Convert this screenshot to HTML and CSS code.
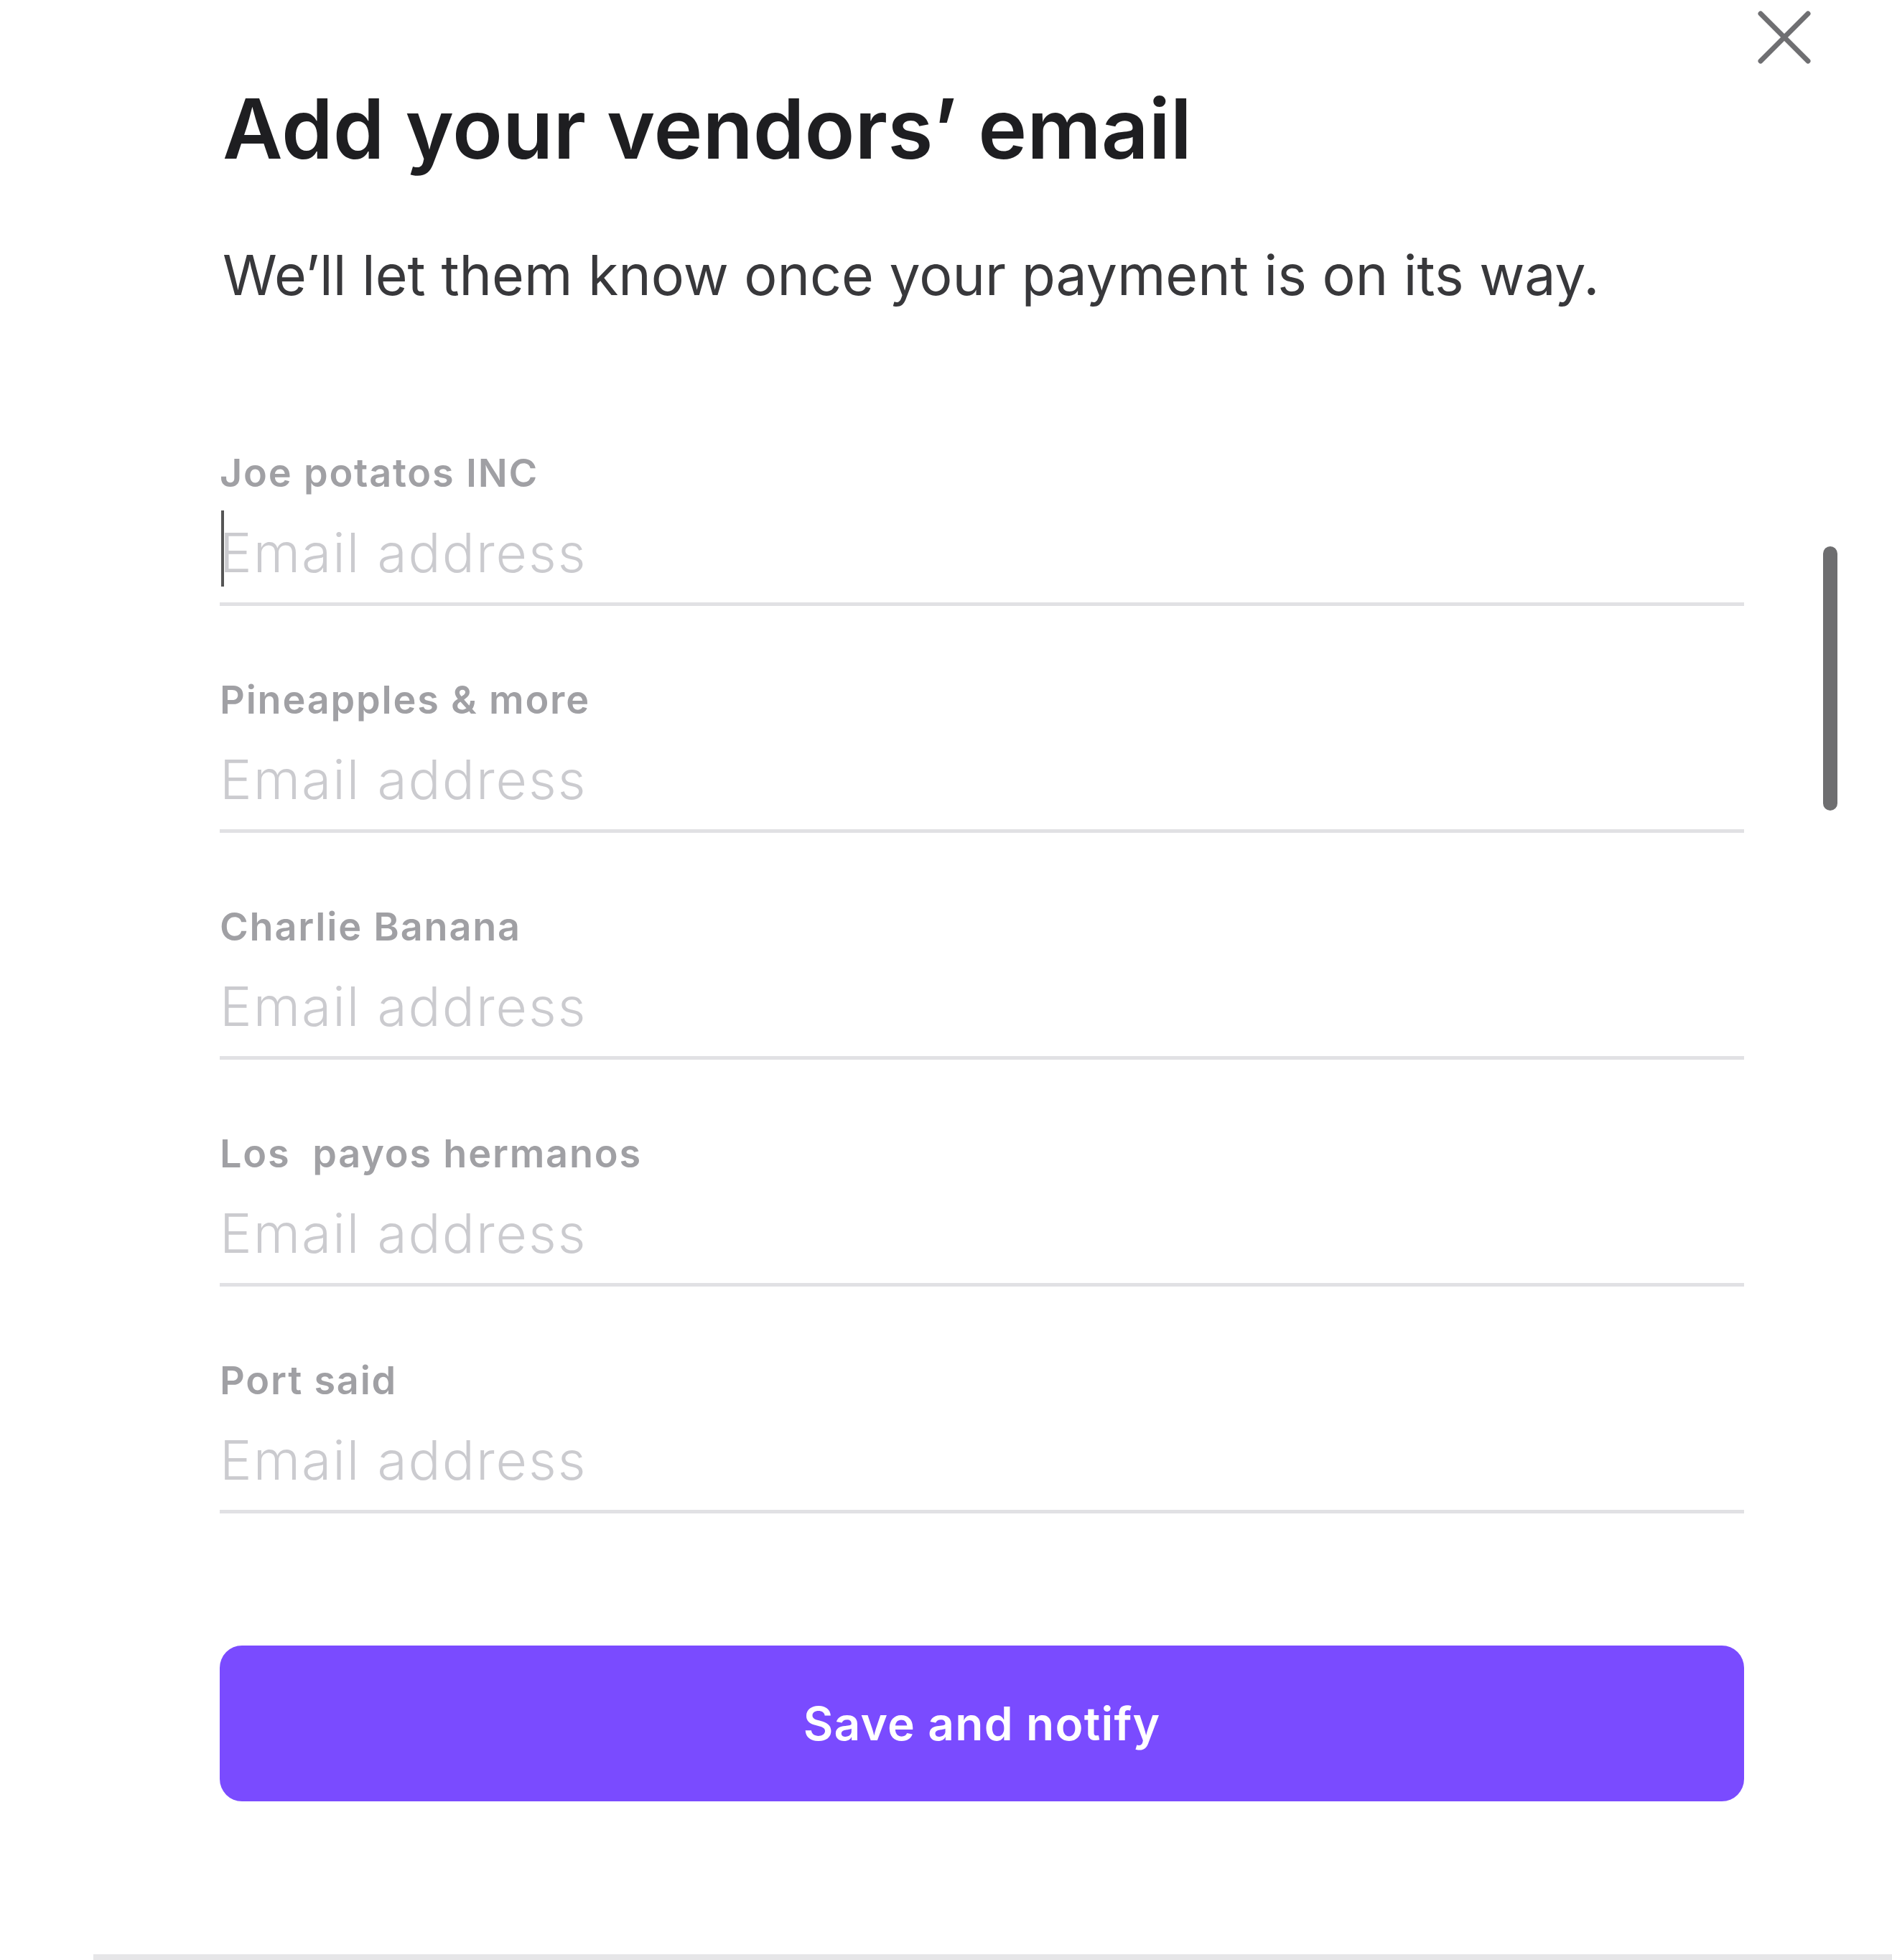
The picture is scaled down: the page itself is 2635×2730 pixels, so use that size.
FILE: index.html
```html
<!DOCTYPE html>
<html lang="en">
<head>
  <meta charset="UTF-8" />
  <meta name="viewport" content="width=device-width, initial-scale=1" />
  <title>Add your vendors' email</title>
  <link rel="stylesheet" href="styles.css">
</head>
<body>

  <div class="modal">
    <button class="close" aria-label="Close">
      <svg viewBox="0 0 74 74" width="74" height="74">
        <path d="M4 4 L70 70 M70 4 L4 70" stroke="#6f6f72" stroke-width="7" stroke-linecap="round" fill="none" />
      </svg>
    </button>

    <h1>Add your vendors’ email</h1>
    <p class="lead">We’ll let them know once your payment is on its way.</p>

    <form class="vendors">
      <label class="field">
        <span class="field-name">Joe potatos INC</span>
        <span class="field-input">
          <span class="caret"></span>
          <input type="email" placeholder="Email address" />
        </span>
      </label>
      <label class="field">
        <span class="field-name">Pineapples &amp; more</span>
        <span class="field-input"><input type="email" placeholder="Email address" /></span>
      </label>
      <label class="field">
        <span class="field-name">Charlie Banana</span>
        <span class="field-input"><input type="email" placeholder="Email address" /></span>
      </label>
      <label class="field">
        <span class="field-name">Los&nbsp; payos hermanos</span>
        <span class="field-input"><input type="email" placeholder="Email address" /></span>
      </label>
      <label class="field">
        <span class="field-name">Port said</span>
        <span class="field-input"><input type="email" placeholder="Email address" /></span>
      </label>
    </form>

    <button class="submit">Save and notify</button>

    <!-- scroll thumb -->
    <div class="scroll-thumb"></div>
  </div>

  <div class="modal-edge"></div>

</body>
</html>
```

FILE: styles.css
```css
:root {
  --ink: #1e1e21;
  --text: #38383b;
  --label: #a0a0a4;
  --hint: #cbcbcf;
  --line: #e1e1e4;
  --purple: #7a4bff;
}

body {
  margin: 0;
  background: #fff;
  font-family: Inter, 'Noto Sans', sans-serif;
  color: var(--ink);
}

.modal {
  position: relative;
  height: 2722px;
  padding: 113px 206px 0 306px;
  box-sizing: border-box;
}

.close {
  position: absolute;
  top: 15px;
  right: 113px;
  padding: 0;
  border: none;
  background: none;
  cursor: pointer;
}

.close svg {
  display: block;
}

h1 {
  margin: 0 0 0 4px;
  font-size: 115px;
  line-height: 134px;
  font-weight: 600;
  letter-spacing: 0;
}

.lead {
  margin: 92px 0 0 4px;
  font-size: 77px;
  line-height: 88px;
  color: var(--text);
}

.vendors {
  margin-top: 202px;
  display: flex;
  flex-direction: column;
  gap: 101px;
}

.field {
  display: flex;
  flex-direction: column;
  gap: 38px;
}

.field-name {
  font-size: 54px;
  line-height: 60px;
  font-weight: 600;
  letter-spacing: 1.8px;
  color: var(--label);
}

.field-input {
  position: relative;
  display: block;
  border-bottom: 5px solid var(--line);
  padding-bottom: 26px;
}

.field-input input {
  display: block;
  width: 100%;
  border: none;
  outline: none;
  padding: 0;
  font-family: inherit;
  font-size: 75px;
  line-height: 88px;
  height: 86px;
  font-weight: 300;
  letter-spacing: 2px;
  color: var(--ink);
}

.field-input input::placeholder {
  color: var(--hint);
}

.caret {
  position: absolute;
  left: 2px;
  top: -16px;
  width: 4px;
  height: 106px;
  background: #555;
}

.submit {
  display: block;
  width: 100%;
  height: 217px;
  margin-top: 184px;
  border: none;
  border-radius: 31px;
  background: var(--purple);
  color: #fff;
  font-family: inherit;
  font-size: 64px;
  font-weight: 600;
  letter-spacing: 1.2px;
  cursor: pointer;
}

.scroll-thumb {
  position: absolute;
  left: 2539px;
  top: 761px;
  width: 20px;
  height: 368px;
  border-radius: 10px;
  background: #6e6e70;
}

.modal-edge {
  margin-left: 130px;
  height: 8px;
  background: #e6e6e8;
}
```
